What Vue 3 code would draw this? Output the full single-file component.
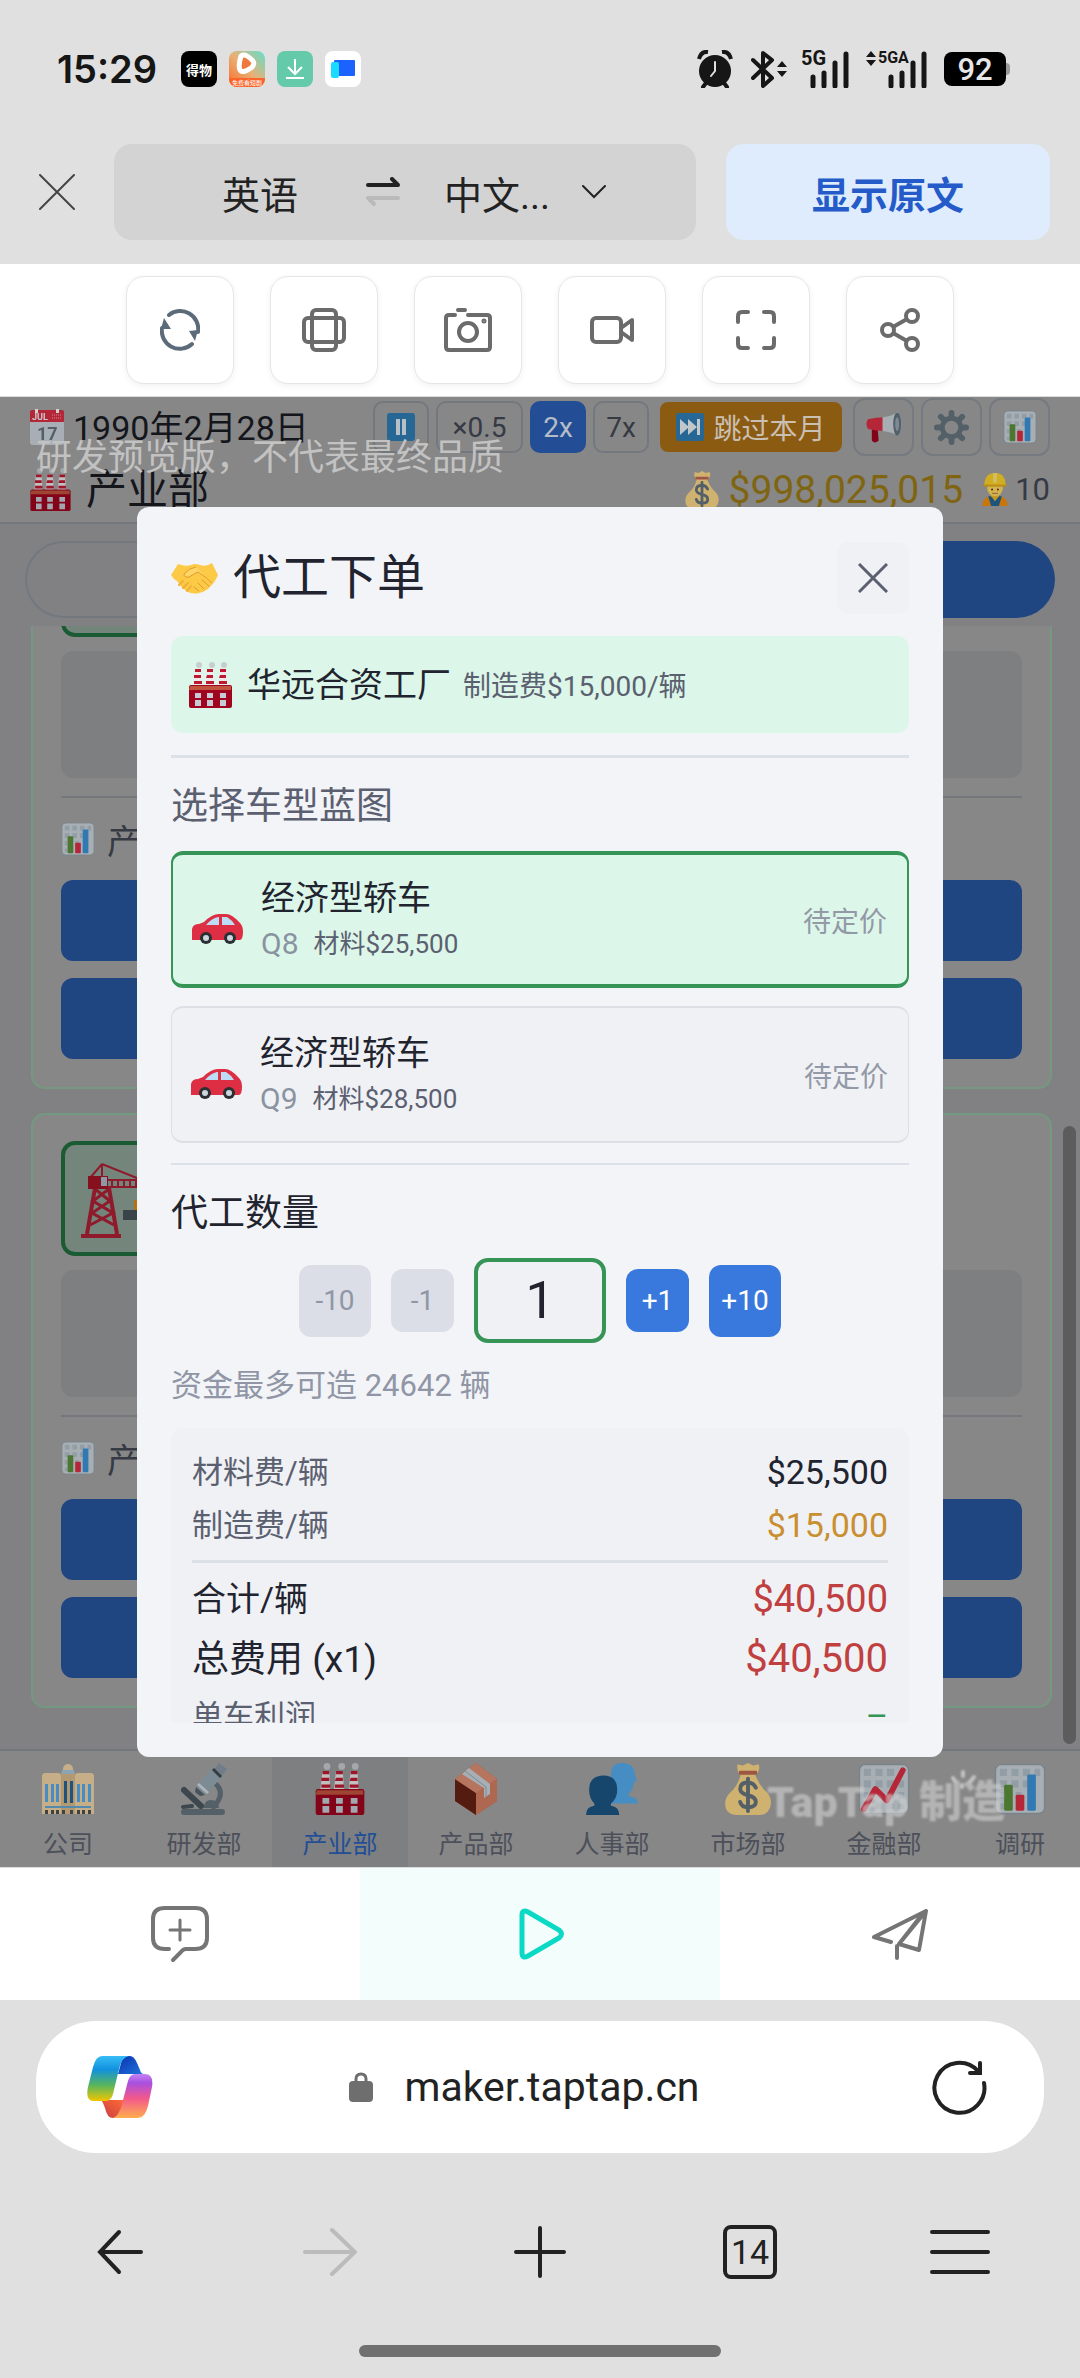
<script setup>
import { ref, computed } from 'vue'

const speeds = [
  { label: '×0.5', cls: 'speed-wide' },
  { label: '2x', cls: 'speed-on' },
  { label: '7x', cls: '' }
]

const departments = [
  { name: '公司', icon: 'company' },
  { name: '研发部', icon: 'microscope' },
  { name: '产业部', icon: 'factory' },
  { name: '产品部', icon: 'box' },
  { name: '人事部', icon: 'people' },
  { name: '市场部', icon: 'bag' },
  { name: '金融部', icon: 'trend' },
  { name: '调研', icon: 'chart' }
]
const activeDept = ref('产业部')

const models = [
  { id: 'Q8', name: '经济型轿车', material: 25500 },
  { id: 'Q9', name: '经济型轿车', material: 28500 }
]
const selectedId = ref('Q8')
const selected = computed(() => models.find((m) => m.id === selectedId.value))
const fee = 15000
const maxQty = 24642
const qty = ref(1)
const unit = computed(() => selected.value.material + fee)
const money = (n) => '$' + n.toLocaleString('en-US')
const change = (d) => {
  qty.value = Math.min(maxQty, Math.max(1, Number(qty.value) + d))
}
</script>

<template>
  <div class="phone">
    <svg class="defs" width="0" height="0" aria-hidden="true">
      <symbol id="factory" viewBox="0 0 43 46">
        <g fill="#c9cdd0"><circle cx="10" cy="3" r="3" /><circle cx="23" cy="3" r="3" /><circle cx="35" cy="3" r="3" /></g>
        <path d="M6 7h6l1 18H4zM18 7h6l1 18h-9zM31 7h6l1 18h-9z" fill="#eee9ea" />
        <path d="M6 7h6v3H6zM5 13h7v3H5zM5 19h8v3H5zM18 7h6v3h-6zM18 13h6v3h-7zM17 19h8v3h-8zM31 7h6v3h-6zM31 13h6v3h-7zM30 19h8v3h-8z" fill="#be1931" />
        <rect y="23" width="43" height="23" rx="2" fill="#a0041e" />
        <path d="M1 24h41v4H0z" fill="#c1543f" />
        <path d="M6 31h6v5H6zM18 31h6v5h-6zM31 31h6v5h-6zM6 38h6v6H6zM18 38h6v6h-6zM31 38h6v6h-6z" fill="#c5ccd6" />
      </symbol>
      <symbol id="chart" viewBox="0 0 36 36">
        <rect x="1" y="1" width="34" height="34" rx="4" fill="#ccd6dd" stroke="#94a0a8" />
        <path d="M4 4h5v5H4zM12 4h5v5h-5zM20 4h5v5h-5zM28 4h4v5h-4zM4 12h5v5H4zM12 12h5v5h-5zM20 12h5v5h-5zM4 20h3v5H4zM15 20h4v5h-4zM4 28h3v4H4z" fill="#b2c0c9" />
        <rect x="7" y="15" width="6" height="18" rx="1" fill="#5c913b" />
        <rect x="15" y="22" width="6" height="11" rx="1" fill="#dd2e44" />
        <rect x="23" y="8" width="6" height="25" rx="1" fill="#3b94d9" />
      </symbol>
      <symbol id="trend" viewBox="0 0 36 36">
        <rect x="1" y="1" width="34" height="34" rx="4" fill="#ccd6dd" stroke="#94a0a8" />
        <path d="M4 4h5v5H4zM12 4h5v5h-5zM20 4h5v5h-5zM4 12h5v5H4zM12 12h5v5h-5zM20 12h5v5h-5zM28 12h4v5h-4zM4 20h3v5H4zM20 20h5v5h-5zM28 20h4v5h-4zM12 28h5v4h-5zM20 28h5v4h-5zM28 28h4v4h-4z" fill="#b2c0c9" />
        <path d="M4 32l8-14 8 8L31 5" fill="none" stroke="#dd2e44" stroke-width="4" stroke-linecap="round" stroke-linejoin="round" />
      </symbol>
      <symbol id="bag" viewBox="0 0 36 40">
        <path d="M11 8Q9 4 10 1l4 1 4-2 4 2 4-1q2 3-1 7l-3 4h-8z" fill="#fdd888" />
        <path d="M12 10h12Q27 18 33 23q4 5 2 11-2 6-8 6H9q-6 0-8-5-2-7 3-12 6-5 8-13z" fill="#fdd888" />
        <rect x="11" y="6" width="14" height="3" rx="1" fill="#bf6952" />
        <path d="M24 19q-2-4-6-4-6 0-6 5 0 3 6 5 6 1 6 5 0 4-6 4-5 0-6-4M18 12v25" fill="none" stroke="#67757f" stroke-width="3" stroke-linecap="round" />
      </symbol>
      <symbol id="company" viewBox="0 0 52 50">
        <path d="M0 11l2-2h15l2 2v39H0zM33 11l2-2h15l2 2v39H33z" fill="#f2d6a6" />
        <circle cx="26" cy="5" r="5" fill="#f2d6a6" />
        <path d="M19 8h14v42H19z" fill="#d9ba8b" />
        <path d="M20 6h12v4H20z" fill="#a8c9dc" />
        <path d="M3 20h3v18H3zM9 20h3v18H9zM14 20h3v18h-3zM35 20h3v18h-3zM40 20h3v18h-3zM46 20h3v18h-3z" fill="#55acee" />
        <path d="M22 17h3v22h-3zM28 17h3v22h-3z" fill="#226699" />
        <path d="M3 42h46v2H3z" fill="#66a8d0" />
        <path d="M3 46h3v4H3zM9 46h3v4H9zM14 46h3v4h-3zM20 46h3v4h-3zM28 46h3v4h-3zM35 46h3v4h-3zM40 46h3v4h-3zM46 46h3v4h-3z" fill="#4b5052" />
      </symbol>
      <symbol id="microscope" viewBox="0 0 46 52">
        <path d="M34 20q9 8 3 18-2 4-6 8" fill="none" stroke="#66757f" stroke-width="5" />
        <path d="M23 45q0-8 7-8t8 8z" fill="#66757f" />
        <rect y="46" width="44" height="6" rx="3" fill="#66757f" />
        <path d="M3 27l17 16" stroke="#4a585f" stroke-width="6" stroke-linecap="round" />
        <path d="M2 44l9-1" stroke="#4a585f" stroke-width="4" stroke-linecap="round" />
        <path d="M15 24L31 5l10 9-17 18z" fill="#99aab5" />
        <path d="M15 24l9 8-5 1-5-4z" fill="#56646c" />
        <path d="M17 21l10 9" stroke="#d3dde3" stroke-width="3" />
        <path d="M33 7l5-7 8 6-6 8z" fill="#8899a6" />
        <path d="M32 6l8 8" stroke="#3e4a51" stroke-width="3" />
      </symbol>
      <symbol id="box" viewBox="0 0 42 52">
        <path d="M21 0l21 16v22L21 52 0 38V16z" fill="#c1694f" />
        <path d="M0 16l21 14v22L0 38z" fill="#662113" />
        <path d="M21 30l21-14v22L21 52z" fill="#d47e61" />
        <path d="M0 16L21 0l21 16-21 14z" fill="#dd8f74" />
        <path d="M7 11l7-6 21 16v10l-6 4V25z" fill="#ccd6dd" />
        <path d="M10 8l21 16v10" stroke="#99aab5" stroke-width="1" fill="none" />
      </symbol>
      <symbol id="people" viewBox="0 0 50 50">
        <path d="M34 0q13 0 13 12l2 5-3 2q-1 8-5 10v3q9 1 9 7H24V14Q23 0 34 0z" fill="#55acee" />
        <path d="M17 12q13 0 13 14 0 8-6 13v2q8 1 8 9H0q0-8 8-9v-2q-5-5-5-13 0-14 14-14z" fill="#1c5584" />
      </symbol>
      <symbol id="horn" viewBox="0 0 36 32">
        <path d="M6 18h6l1 12q-4 4-7 0z" fill="#a0041e" />
        <path d="M2 8q8-2 17-2v14q-8 0-17-2-3-5 0-10z" fill="#dd2e44" />
        <path d="M17 6Q27 5 33 0v25q-6-4-16-5z" fill="#ccd6dd" />
        <ellipse cx="32" cy="13" rx="4" ry="12" fill="#66757f" />
        <ellipse cx="32" cy="13" rx="2" ry="7" fill="#99aab5" />
      </symbol>
      <symbol id="gear" viewBox="0 0 36 36">
        <g stroke="#66757f" stroke-width="6" stroke-linecap="round">
          <path d="M18 3v30M3 18h30M7 7l22 22M29 7L7 29" />
        </g>
        <circle cx="18" cy="18" r="12" fill="#66757f" />
        <circle cx="18" cy="18" r="7" fill="#a3a3a3" />
      </symbol>
      <symbol id="worker" viewBox="0 0 26 34">
        <path d="M0 34q0-9 8-10h10q8 1 8 10z" fill="#f4900c" />
        <path d="M6 24h14l-3 10H9z" fill="#269" />
        <path d="M9 24l4 5 4-5v-3H9z" fill="#f1b92a" />
        <circle cx="13" cy="16" r="8" fill="#ffdc5d" />
        <path d="M2 13Q2 0 13 0t11 13z" fill="#ffd32a" />
        <path d="M1 12h24v2H1z" fill="#e5a91a" />
        <path d="M11 0h4v10h-4z" fill="#ffe678" />
        <circle cx="10" cy="17" r="1" fill="#662113" /><circle cx="16" cy="17" r="1" fill="#662113" />
        <path d="M10 21h6" stroke="#c1694f" />
      </symbol>
      <symbol id="car" viewBox="0 0 51 30">
        <path d="M0 26V15q1-5 7-5l5-2Q20 0 27 0h7q6 0 14 9 3 3 3 9 0 7-3 8z" fill="#dd2e44" />
        <path d="M14 11q6-7 12-8h1v8zM30 3h5q5 3 8 8H30z" fill="#bbddf5" />
        <circle cx="14" cy="24" r="6" fill="#292f33" /><circle cx="38" cy="24" r="6" fill="#292f33" />
        <circle cx="14" cy="24" r="3" fill="#ccd6dd" /><circle cx="38" cy="24" r="3" fill="#ccd6dd" />
      </symbol>
      <symbol id="handshake" viewBox="0 0 47 31">
        <path d="M0 12L7 1q7 3 13 1 4-2 9 0 6 2 12-2l6 12-3 6q-3 4-7 8-4 3-9 4-8 2-14-3-5-4-8-9-4-2-6-6z" fill="#fdca47" />
        <path d="M25 4q-7 1-12 7 0 4 5 3 5-3 9-5 8 5 14 11" fill="#ffd566" stroke="#e09a2b" stroke-width="1" />
        <path d="M31 17l7 6M27 20l6 6M23 24l5 4" fill="none" stroke="#e09a2b" stroke-width="1" stroke-linecap="round" />
        <path d="M8 22l4-4M12 25l5-5M16 28l4-5" fill="none" stroke="#f0b036" stroke-width="2" stroke-linecap="round" />
      </symbol>
      <symbol id="crane" viewBox="0 0 76 76">
        <g fill="none" stroke="#8f1a2b">
          <path d="M21 2v12M21 2L9 16M21 2l55 22" stroke-width="2" />
          <path d="M14 26L6 72M28 26l8 46" stroke-width="4" />
          <path d="M14 27l15 12-18 12 22 12M28 27L12 39l20 12L9 63" stroke-width="3" />
          <path d="M26 18h50M26 25h50" stroke-width="2" />
          <path d="M31 18v7M37 18v7M43 18v7M49 18v7M55 18v7" stroke-width="2" />
        </g>
        <path d="M7 14h20v13H7z" fill="#87101f" />
        <path d="M20 15h6v9h-6z" fill="#8b9aa6" />
        <path d="M0 72h40v4H0z" fill="#8f1a2b" />
        <path d="M58 26v14" stroke="#39434a" stroke-width="2" />
        <path d="M53 38h20v10H53z" fill="#b4730d" />
        <path d="M42 48h34v10H42z" fill="#39434a" />
      </symbol>
    </svg>

    <header class="status">
      <span class="clock">15:29</span>
      <span class="app-icon app-black">得物</span>
      <span class="app-icon app-video">
        <svg width="24" height="26" viewBox="0 0 24 26"><path d="M6 4Q10 1 17 8q4 4-1 8-9 6-11 2-2-4 1-14z" fill="#f0783c" stroke="#fff" stroke-width="5" stroke-linejoin="round" /></svg>
        <small>免费看短剧</small>
      </span>
      <span class="app-icon app-green">
        <svg width="20" height="22" viewBox="0 0 20 22" fill="none" stroke="#fff" stroke-width="2"><path d="M10 1v14M3 9l7 7 7-7M1 20h18" /></svg>
      </span>
      <span class="app-icon app-white">
        <svg width="26" height="22" viewBox="0 0 26 22"><rect x="4" y="2" width="21" height="16" rx="1" fill="#1b62ff" /><rect x="1" y="4" width="8" height="16" rx="2" fill="#18dcff" /></svg>
      </span>
      <span class="grow"></span>
      <svg class="st-alarm" width="36" height="38" viewBox="0 0 36 38">
        <path d="M2 9Q4 1 11 2M34 9Q32 1 25 2" stroke="#161616" stroke-width="4" fill="none" />
        <path d="M9 33l-3 4M27 33l3 4" stroke="#161616" stroke-width="4" stroke-linecap="round" />
        <circle cx="18" cy="21" r="16" fill="#161616" />
        <path d="M18 12v9l-4 5" stroke="#e0e0e0" stroke-width="2" fill="none" stroke-linecap="round" />
      </svg>
      <svg class="st-bt" width="36" height="38" viewBox="0 0 36 38">
        <path d="M2 10l19 18-9 8V3l9 7L2 28" fill="none" stroke="#161616" stroke-width="4" stroke-linejoin="round" stroke-linecap="round" />
        <path d="M26 17l5-6 5 6zM26 21h10l-5 6z" fill="#161616" />
      </svg>
      <span class="signal">
        <b>5G</b>
        <svg width="39" height="37" viewBox="0 0 39 37"><path d="M3 26v9M14 22v13M25 12v23M36 3v32" stroke="#161616" stroke-width="5" stroke-linecap="round" /></svg>
      </span>
      <span class="signal signal-a">
        <svg class="updown" width="10" height="16" viewBox="0 0 10 16"><path d="M0 6l5-6 5 6zM0 9h10l-5 6z" fill="#161616" /></svg>
        <b>5GA</b>
        <svg width="39" height="37" viewBox="0 0 39 37"><path d="M3 26v9M14 22v13M25 12v23M36 3v32" stroke="#161616" stroke-width="5" stroke-linecap="round" /></svg>
      </span>
      <span class="battery">92</span>
    </header>

    <div class="translate">
      <button class="plain" aria-label="关闭翻译">
        <svg width="36" height="36" viewBox="0 0 36 36"><path d="M1 1l34 34M35 1L1 35" stroke="#444" stroke-width="2" stroke-linecap="round" /></svg>
      </button>
      <div class="langs">
        <button class="plain lang-from">英语</button>
        <svg class="swap" width="34" height="30" viewBox="0 0 34 30" fill="none" stroke-width="4" stroke-linecap="round" stroke-linejoin="round">
          <path d="M2 8h30l-6-6" stroke="#222" /><path d="M32 21H2l6 6" stroke="#bababa" />
        </svg>
        <button class="plain lang-to">中文...
          <svg width="24" height="14" viewBox="0 0 24 14"><path d="M1 1l11 11L23 1" fill="none" stroke="#222" stroke-width="2" stroke-linecap="round" /></svg>
        </button>
      </div>
      <button class="show-original">显示原文</button>
    </div>

    <nav class="tools">
      <button class="tool" aria-label="刷新">
        <svg width="40" height="42" viewBox="0 0 40 42"><path d="M9 6a18 18 0 0 1 29 17M32 35A18 18 0 0 1 2 19" fill="none" stroke="#5c6b79" stroke-width="4" stroke-linecap="round" /><path d="M29 22l9-1-3 11zM11 20L4 9 1 20z" fill="#5c6b79" /></svg>
      </button>
      <button class="tool" aria-label="旋转">
        <svg width="44" height="44" viewBox="0 0 44 44" fill="none" stroke="#6b6b6b" stroke-width="4"><rect x="2" y="10" width="40" height="24" rx="4" /><rect x="10" y="2" width="24" height="40" rx="4" /></svg>
      </button>
      <button class="tool" aria-label="截图">
        <svg width="48" height="44" viewBox="0 0 48 44" fill="none" stroke="#6b6b6b" stroke-width="4" stroke-linecap="round"><path d="M11 7H5q-3 0-3 3v29q0 3 3 3h38q3 0 3-3V10q0-3-3-3H24M14 2h7" /><circle cx="24" cy="24" r="9" /><circle cx="40" cy="13" r="1" stroke-width="3" /></svg>
      </button>
      <button class="tool" aria-label="录屏">
        <svg width="44" height="30" viewBox="0 0 44 30" fill="none" stroke="#6b6b6b" stroke-width="4" stroke-linejoin="round"><rect x="2" y="3" width="29" height="24" rx="4" /><path d="M31 13l11-8v20l-11-8" /></svg>
      </button>
      <button class="tool" aria-label="全屏">
        <svg width="40" height="40" viewBox="0 0 40 40" fill="none" stroke="#6b6b6b" stroke-width="4" stroke-linecap="round"><path d="M2 12V6q0-4 4-4h6M28 2h6q4 0 4 4v6M38 28v6q0 4-4 4h-6M12 38H6q-4 0-4-4v-6" /></svg>
      </button>
      <button class="tool" aria-label="分享">
        <svg width="40" height="44" viewBox="0 0 40 44" fill="none" stroke="#6b6b6b" stroke-width="4"><circle cx="32" cy="8" r="6" /><circle cx="8" cy="22" r="6" /><circle cx="32" cy="36" r="6" /><path d="M13 19l14-8M13 25l14 8" /></svg>
      </button>
    </nav>

    <main class="game">
      <section class="backdrop">
        <div class="topbar">
          <div class="row row-date">
            <svg class="dim" width="34" height="36" viewBox="0 0 34 36">
              <rect y="10" width="34" height="26" rx="3" fill="#ccd6dd" />
              <path d="M0 3q0-2 2-2h30q2 0 2 2v10H0z" fill="#dd2e44" />
              <path d="M5 0h3v4H5zM26 0h3v4h-3z" fill="#fff" />
              <text x="2" y="11" font-size="9" font-weight="700" fill="#f3f5f6">JUL</text>
              <path d="M22 6h10M22 9h10" stroke="#f4abb4" stroke-width="1" stroke-dasharray="1 1" />
              <text x="7" y="31" font-size="18" font-weight="700" fill="#66757f">17</text>
            </svg>
            <span class="date">1990年2月28日</span>
            <span class="grow"></span>
            <button class="speed" aria-label="暂停">
              <svg width="28" height="28" viewBox="0 0 28 28"><rect width="28" height="28" rx="3" fill="#266795" /><path d="M11 6v16M17 6v16" stroke="#b7c0c6" stroke-width="4" /></svg>
            </button>
            <button v-for="s in speeds" :key="s.label" class="speed" :class="s.cls">{{ s.label }}</button>
            <button class="skip">
              <svg width="28" height="28" viewBox="0 0 28 28"><rect width="28" height="28" rx="3" fill="#266795" /><path d="M4 6l9 8-9 8zM12 6l9 8-9 8zM21 6h3v16h-3z" fill="#c0c6ca" /></svg>
              跳过本月
            </button>
            <button class="square" aria-label="公告"><svg class="dim" width="35" height="32"><use href="#horn" /></svg></button>
            <button class="square" aria-label="设置"><svg class="dim" width="35" height="35"><use href="#gear" /></svg></button>
            <button class="square" aria-label="统计"><svg class="dim" width="34" height="34"><use href="#chart" /></svg></button>
          </div>
          <div class="row row-dept">
            <svg class="dim" width="41" height="43"><use href="#factory" /></svg>
            <h1>产业部</h1>
            <span class="grow"></span>
            <svg class="dim" width="34" height="38"><use href="#bag" /></svg>
            <span class="cash">$998,025,015</span>
            <svg class="dim" width="26" height="33"><use href="#worker" /></svg>
            <span class="staff">10</span>
          </div>
        </div>
        <div class="pills">
          <button class="pill" aria-label="自有"></button>
          <button class="pill pill-on" aria-label="代工"></button>
        </div>
        <div class="plants">
          <article v-for="n in 2" :key="n" class="plant">
            <div class="plant-icon"><svg width="76" height="76"><use href="#crane" /></svg></div>
            <div class="plant-info"></div>
            <div class="plant-stats"><svg class="dim" width="34" height="34"><use href="#chart" /></svg>产</div>
            <button class="plant-btn" aria-label="下单"></button>
            <button class="plant-btn" aria-label="详情"></button>
          </article>
          <i class="scrollbar"></i>
        </div>
        <nav class="depts">
          <button v-for="d in departments" :key="d.name" class="dept" :class="{ 'dept-on': d.name === activeDept }">
            <svg class="dim" width="52" height="52"><use :href="'#' + d.icon" /></svg>
            {{ d.name }}
          </button>
        </nav>
        <p class="notice">研发预览版，不代表最终品质</p>
        <p class="brand">TapTap 制造
          <svg width="30" height="20" viewBox="0 0 30 20" fill="none" stroke="#c4c4c4" stroke-width="4" stroke-linecap="round"><path d="M4 8l2 3M14 2v4M25 7l-4 5M13 15v2" /></svg>
        </p>
      </section>

      <div class="overlay">
        <section class="dialog" role="dialog" aria-label="代工下单">
          <div class="head">
            <svg width="47" height="31"><use href="#handshake" /></svg>
            <h2>代工下单</h2>
            <button class="close" aria-label="关闭">
              <svg width="30" height="30" viewBox="0 0 30 30"><path d="M1 1l28 28M29 1L1 29" stroke="#5b6070" stroke-width="3" /></svg>
            </button>
          </div>
          <div class="body">
            <div class="banner">
              <svg width="43" height="46"><use href="#factory" /></svg>
              <strong>华远合资工厂</strong>
              <span>制造费{{ money(fee) }}/辆</span>
            </div>
            <h3 class="section section-muted">选择车型蓝图</h3>
            <div class="models">
              <button
                v-for="m in models"
                :key="m.id"
                class="model"
                :class="{ 'model-on': m.id === selectedId }"
                :aria-pressed="m.id === selectedId"
                @click="selectedId = m.id"
              >
                <svg width="51" height="30"><use href="#car" /></svg>
                <span class="model-text">
                  <span class="model-name">{{ m.name }}</span>
                  <span class="model-sub"><span class="model-q">{{ m.id }}</span>材料{{ money(m.material) }}</span>
                </span>
                <span class="model-price">待定价</span>
              </button>
            </div>
            <h3 class="section section-thin"><label for="qty">代工数量</label></h3>
            <div class="stepper">
              <button class="step step-big" :disabled="qty <= 1" @click="change(-10)">-10</button>
              <button class="step" :disabled="qty <= 1" @click="change(-1)">-1</button>
              <input id="qty" v-model="qty" inputmode="numeric" />
              <button class="step" @click="change(1)">+1</button>
              <button class="step step-big" @click="change(10)">+10</button>
            </div>
            <p class="hint">资金最多可造 {{ maxQty }} 辆</p>
            <dl class="costs">
              <div class="cost"><dt>材料费/辆</dt><dd>{{ money(selected.material) }}</dd></div>
              <div class="cost"><dt>制造费/辆</dt><dd class="amber">{{ money(fee) }}</dd></div>
              <div class="cost cost-sum"><dt>合计/辆</dt><dd>{{ money(unit) }}</dd></div>
              <div class="cost cost-total"><dt>总费用 (x{{ qty }})</dt><dd>{{ money(unit * qty) }}</dd></div>
              <div class="cost"><dt>单车利润</dt><dd class="green">–</dd></div>
            </dl>
          </div>
        </section>
      </div>
    </main>

    <nav class="maker">
      <button aria-label="评论">
        <svg width="60" height="58" viewBox="0 0 60 58" fill="none" stroke="#757575" stroke-linecap="round"><path d="M19 44h-4q-12 0-12-11V14Q3 3 15 3h30q12 0 12 11v19q0 11-12 11H36q-3 0-5 3l-8 8" stroke-width="4" /><path d="M30 15v20M20 25h20" stroke-width="3" /></svg>
      </button>
      <button class="maker-on" aria-label="播放">
        <svg width="48" height="52" viewBox="0 0 48 52"><path d="M6 7q0-6 6-3l31 18q5 4 0 8L12 48q-6 3-6-3z" fill="none" stroke="#0ad9c6" stroke-width="5" /></svg>
      </button>
      <button aria-label="发送">
        <svg width="56" height="52" viewBox="0 0 56 52" fill="none" stroke="#757575" stroke-width="4" stroke-linecap="round" stroke-linejoin="round"><path d="M19 34L2 29 54 3l-7 39-20-6L54 3M27 36L52 4M25 38v12" /></svg>
      </button>
    </nav>

    <footer class="browser">
      <div class="address">
        <svg width="66" height="62" viewBox="0 0 66 62">
          <defs>
            <linearGradient id="cp1" x1="0" y1="0" x2="0" y2="1"><stop offset="0" stop-color="#36bdf5" /><stop offset=".3" stop-color="#1291df" /><stop offset=".65" stop-color="#58b65c" /><stop offset="1" stop-color="#f2c600" /></linearGradient>
            <linearGradient id="cp2" x1="0" y1="0" x2="0" y2="1"><stop offset="0" stop-color="#c583f5" /><stop offset=".2" stop-color="#a850e0" /><stop offset=".55" stop-color="#f2588c" /><stop offset="1" stop-color="#ffae4e" /></linearGradient>
            <linearGradient id="cp3" x1="0" y1="0" x2="1" y2="1"><stop offset="0" stop-color="#0a2fb0" /><stop offset="1" stop-color="#1f78dc" /></linearGradient>
            <linearGradient id="cp4" x1="0" y1="1" x2="1" y2="0"><stop offset="0" stop-color="#c53c48" /><stop offset="1" stop-color="#ff6b33" /></linearGradient>
          </defs>
          <path d="M36 0h7q4 0 7 7l3 7q1 4 4 4H31z" fill="url(#cp3)" />
          <path d="M32 62h-6q-6 0-8-10l-2-5q-1-3-4-3h26z" fill="url(#cp4)" />
          <path d="M15 0h27q-7 1-10 13l-6 25q-2 7-7 7H7q-9 0-6-14L6 11Q9 0 15 0z" fill="url(#cp1)" />
          <path d="M51 62H26q6-2 9-14l6-23q2-7 7-7h10q9 0 7 13l-4 19q-3 12-10 12z" fill="url(#cp2)" />
        </svg>
        <a class="url" href="#">
          <svg width="24" height="30" viewBox="0 0 24 30"><path d="M7 12V7q0-5 5-5t5 5v5" fill="none" stroke="#6e6e6e" stroke-width="3" /><rect y="9" width="24" height="21" rx="4" fill="#6e6e6e" /></svg>
          maker.taptap.cn
        </a>
        <button class="plain" aria-label="刷新页面">
          <svg width="56" height="56" viewBox="0 0 56 56" fill="none" stroke="#222" stroke-width="4" stroke-linecap="round"><path d="M52 24A25 25 0 1 1 46 12M38 14h10V4" /></svg>
        </button>
      </div>
      <nav class="keys">
        <button class="plain" aria-label="后退"><svg width="46" height="46" viewBox="0 0 46 46" fill="none" stroke="#222" stroke-width="4" stroke-linecap="round"><path d="M22 3L3 23l19 20M3 23h41" /></svg></button>
        <button class="plain" aria-label="前进"><svg width="54" height="50" viewBox="0 0 54 50" fill="none" stroke="#bbb" stroke-width="4" stroke-linecap="round"><path d="M29 3l23 22-23 22M52 25H2" /></svg></button>
        <button class="plain" aria-label="新建标签页"><svg width="52" height="52" viewBox="0 0 52 52" stroke="#222" stroke-width="4" stroke-linecap="round"><path d="M26 2v48M2 26h48" /></svg></button>
        <button class="plain tabs" aria-label="标签页"><span>14</span></button>
        <button class="plain" aria-label="菜单"><svg width="60" height="44" viewBox="0 0 60 44" stroke="#222" stroke-width="4" stroke-linecap="round"><path d="M2 2h56M2 22h56M2 42h56" /></svg></button>
      </nav>
      <div class="homebar"></div>
    </footer>
  </div>
</template>

<style>
body {
  margin: 0;
  background: #e0e0e0;
}
</style>

<style scoped>
.phone {
  display: flex;
  flex-direction: column;
  height: 100vh;
  background: #e0e0e0;
  color: #222;
  font-family: Roboto, "Noto Sans CJK SC", sans-serif;
}
.phone * {
  box-sizing: border-box;
}
.defs {
  position: absolute;
}
button,
input {
  margin: 0;
  padding: 0;
  border: 0;
  background: none;
  color: inherit;
  font: inherit;
}
svg {
  flex: none;
}
h1,
h2,
h3,
p,
dl,
dd {
  margin: 0;
  font-weight: 400;
}
.grow {
  flex: 1;
}
.plain {
  display: flex;
  align-items: center;
  justify-content: center;
}

/* system status bar */
.status {
  display: flex;
  align-items: center;
  flex: none;
  height: 140px;
  padding: 0 74px 2px 57px;
}
.clock {
  margin-right: 24px;
  font-family: Inter, Roboto, sans-serif;
  font-size: 38px;
  font-weight: 600;
  color: #161616;
}
.app-icon {
  display: flex;
  align-items: center;
  justify-content: center;
  width: 36px;
  height: 36px;
  margin-right: 12px;
  border-radius: 8px;
  overflow: hidden;
}
.app-black {
  background: #000;
  color: #fff;
  font-size: 13px;
  font-weight: 700;
}
.app-video {
  flex-direction: column;
  background: linear-gradient(to bottom left, #5fe0cc, #e8b176 50%, #fb6a28);
}
.app-video small {
  width: 36px;
  background: #fa6428;
  color: #fff;
  font-size: 6px;
  line-height: 9px;
  text-align: center;
}
.app-green {
  background: #64caaa;
}
.app-white {
  background: #fff;
}
.st-alarm {
  margin-right: 18px;
}
.st-bt {
  margin-right: 14px;
}
.signal {
  position: relative;
  display: flex;
  align-items: flex-end;
  justify-content: flex-end;
  width: 48px;
  height: 37px;
  margin-right: 17px;
}
.signal b {
  position: absolute;
  top: -3px;
  left: 0;
  font-size: 20px;
  line-height: 20px;
  color: #161616;
}
.signal-a {
  width: 61px;
}
.signal-a b {
  left: 12px;
  font-size: 16px;
}
.updown {
  position: absolute;
  top: 0;
  left: 0;
}
.battery {
  position: relative;
  width: 62px;
  height: 34px;
  border-radius: 8px;
  background: #000;
  color: #e6e6e6;
  font-size: 31px;
  font-weight: 500;
  line-height: 35px;
  text-align: center;
}
.battery::after {
  content: "";
  position: absolute;
  top: 11px;
  right: -4px;
  width: 4px;
  height: 12px;
  border-radius: 0 4px 4px 0;
  background: #999;
}

/* translation bar */
.translate {
  display: flex;
  align-items: center;
  flex: none;
  gap: 30px;
  padding: 4px 30px 24px 39px;
}
.langs {
  display: flex;
  flex: 1;
  align-items: center;
  justify-content: center;
  height: 96px;
  margin-left: 9px;
  border-radius: 18px;
  background: #d3d3d3;
  font-size: 38px;
}
.swap {
  margin: 0 44px 0 68px;
}
.lang-to {
  gap: 32px;
}
.lang-from {
  padding-left: 18px;
}
.show-original {
  width: 324px;
  height: 96px;
  border-radius: 18px;
  background: #dfecfe;
  color: #245bc9;
  font-size: 38px;
  font-weight: 700;
}

/* page tools */
.tools {
  display: flex;
  align-items: center;
  justify-content: center;
  flex: none;
  gap: 36px;
  height: 133px;
  border-bottom: 1px solid #dcdcdc;
  background: #fff;
}
.tool {
  display: flex;
  align-items: center;
  justify-content: center;
  width: 108px;
  height: 108px;
  border: 1px solid #e6e6e6;
  border-radius: 18px;
  background: #fff;
  box-shadow: 0 2px 6px rgba(0, 0, 0, 0.06);
}

/* game behind the dialog */
.game {
  display: grid;
  grid-template: minmax(0, 1fr) / minmax(0, 1fr);
  flex: 1;
  min-height: 0;
}
.backdrop,
.overlay {
  grid-area: 1 / 1;
  min-height: 0;
}
.backdrop {
  position: relative;
  display: flex;
  flex-direction: column;
  overflow: hidden;
  background: #818184;
}
.dim {
  filter: brightness(0.82);
}
.topbar {
  flex: none;
  border-bottom: 2px solid #72777c;
  background: #878787;
}
.row {
  display: flex;
  align-items: center;
  padding: 0 30px;
}
.row-date {
  gap: 7px;
  height: 60px;
}
.date {
  margin-left: 2px;
  padding-bottom: 4px;
  color: #14161c;
  font-size: 34px;
}
.speed {
  display: flex;
  align-items: center;
  justify-content: center;
  width: 56px;
  height: 52px;
  border: 2px solid #73787f;
  border-radius: 10px;
  color: #363a44;
  font-size: 28px;
}
.speed-wide {
  width: 87px;
}
.speed-on {
  border: 0;
  background: #234e95;
  color: #b4bcc8;
}
.skip {
  display: flex;
  align-items: center;
  justify-content: center;
  gap: 9px;
  width: 182px;
  height: 50px;
  margin: 0 4px;
  border-radius: 8px;
  background: #8c5b12;
  color: #c9bfb2;
  font-size: 28px;
}
.square {
  display: flex;
  align-items: center;
  justify-content: center;
  width: 61px;
  height: 58px;
  border: 2px solid #757a80;
  border-radius: 12px;
}
.row-dept {
  height: 65px;
}
.row-dept h1 {
  margin-left: 15px;
  color: #14161c;
  font-size: 41px;
  line-height: 60px;
}
.cash {
  margin: 0 19px 0 10px;
  color: #7f6412;
  font-size: 39px;
}
.staff {
  margin-left: 7px;
  color: #363a44;
  font-size: 31px;
}
.pills {
  display: flex;
  flex: none;
  gap: 12px;
  padding: 17px 25px 8px;
}
.pill {
  flex: 1;
  height: 77px;
  border: 2px solid #73787f;
  border-radius: 40px;
}
.pill-on {
  border: 0;
  background: #1f4681;
}
.plants {
  position: relative;
  display: flex;
  flex: 1;
  flex-direction: column;
  justify-content: flex-end;
  gap: 24px;
  min-height: 0;
  padding: 0 28px 41px 31px;
  overflow: hidden;
}
.plant {
  display: flex;
  flex: none;
  flex-direction: column;
  padding: 26px 28px 28px;
  border: 2px solid #739a80;
  border-radius: 14px;
  background: #878787;
}
.plant-icon {
  width: 124px;
  height: 115px;
  margin-bottom: 14px;
  padding: 17px 16px;
  border: 4px solid #1b5b33;
  border-radius: 14px;
  background: #74857b;
  overflow: hidden;
}
.plant-info {
  height: 127px;
  border-radius: 12px;
  background: #7e7f81;
}
.plant-stats {
  display: flex;
  align-items: center;
  gap: 12px;
  height: 84px;
  margin-top: 18px;
  border-top: 2px solid #74777c;
  color: #363a44;
  font-size: 34px;
}
.plant-btn {
  height: 81px;
  border-radius: 12px;
  background: #1f4681;
}
.plant-btn + .plant-btn {
  margin-top: 17px;
}
.scrollbar {
  position: absolute;
  right: 4px;
  bottom: 5px;
  width: 13px;
  height: 55%;
  border-radius: 7px;
  background: #5c5c5c;
}
.depts {
  display: flex;
  flex: none;
  height: 118px;
  border-top: 2px solid #72777c;
  background: #878787;
}
.dept {
  display: flex;
  flex: 1 0 136px;
  flex-direction: column;
  align-items: center;
  padding-top: 12px;
  color: #4c505a;
  font-size: 25px;
  line-height: 59px;
}
.dept-on {
  background: #7d7f81;
  color: #234e95;
}
.notice {
  position: absolute;
  top: 37px;
  left: 36px;
  color: #c2c2c2;
  font-size: 36px;
  line-height: 48px;
}
.brand {
  position: absolute;
  right: 75px;
  bottom: 37px;
  color: rgba(210, 210, 210, 0.6);
  font-size: 43px;
  font-weight: 900;
  line-height: 56px;
  filter: blur(1px);
}
.brand svg {
  position: absolute;
  top: -4px;
  right: 26px;
}

/* order dialog */
.overlay {
  position: relative;
  display: flex;
  padding: 110px 137px;
}
.dialog {
  display: flex;
  flex: 1;
  flex-direction: column;
  min-width: 0;
  padding: 35px 34px 34px;
  border-radius: 12px;
  background: #f3f4f8;
  color: #21242f;
}
.head {
  display: flex;
  align-items: center;
  flex: none;
  gap: 15px;
  margin-bottom: 22px;
}
.head h2 {
  flex: 1;
  font-size: 48px;
  line-height: 72px;
}
.close {
  display: flex;
  align-items: center;
  justify-content: center;
  width: 72px;
  height: 72px;
  border-radius: 12px;
  background: #f0f1f5;
}
.body {
  flex: 1;
  min-height: 0;
  overflow: hidden;
}
.banner {
  display: flex;
  align-items: center;
  height: 97px;
  margin-bottom: 22px;
  padding: 0 18px;
  border-radius: 12px;
  background: #dcf7e9;
}
.banner strong {
  margin: 0 12px 0 15px;
  padding-bottom: 4px;
  font-size: 34px;
  font-weight: 400;
}
.banner span {
  padding-bottom: 2px;
  color: #5b6070;
  font-size: 28px;
}
.section {
  padding: 22px 0 18px;
  border-top: 3px solid #dce0e8;
  font-size: 37px;
  line-height: 53px;
}
.section-muted {
  color: #5b6070;
}
.section-thin {
  margin-top: 20px;
  border-top-width: 2px;
}
.models {
  display: flex;
  flex-direction: column;
  gap: 18px;
}
.model {
  display: flex;
  align-items: center;
  height: 137px;
  padding: 0 20px 0 19px;
  border: 2px solid #dce0e6;
  border-width: 2px 1px;
  border-radius: 12px;
  background: #f0f1f5;
  text-align: left;
}
.model-on {
  border-color: #369556;
  border-width: 4px 2px;
  background: #dcf7e9;
}
.model svg {
  margin-top: 18px;
}
.model-text {
  display: flex;
  flex: 1;
  flex-direction: column;
  margin-left: 18px;
}
.model-name {
  font-size: 34px;
  line-height: 48px;
}
.model-sub {
  display: flex;
  align-items: center;
  gap: 15px;
  color: #5b6070;
  font-size: 26px;
  line-height: 44px;
}
.model-q {
  color: #8a93a0;
  font-size: 30px;
}
.model-price {
  color: #9399a6;
  font-size: 28px;
}
.stepper {
  display: flex;
  align-items: center;
  justify-content: center;
  gap: 20px;
}
.step {
  width: 63px;
  height: 63px;
  border-radius: 12px;
  background: #3978dc;
  color: #fff;
  font-size: 28px;
}
.step-big {
  width: 72px;
  height: 72px;
}
.step:disabled {
  background: #dbdee6;
  color: #9096a5;
}
.stepper input {
  width: 132px;
  height: 85px;
  border: 4px solid #369556;
  border-radius: 14px;
  background: #f0f1f5;
  font-size: 52px;
  text-align: center;
}
.hint {
  padding: 20px 0;
  color: #9096a5;
  font-size: 31px;
  line-height: 45px;
}
.costs {
  padding: 17px 21px;
  border-radius: 12px;
  background: #f0f1f5;
}
.cost {
  display: flex;
  align-items: center;
  justify-content: space-between;
  height: 53px;
}
.cost dt {
  padding-bottom: 4px;
  color: #5b6070;
  font-size: 31px;
}
.cost dd {
  font-size: 34px;
}
.cost-sum {
  height: 74px;
  margin-top: 9px;
  border-top: 3px solid #dbe0e7;
}
.cost-sum dt {
  color: #21242f;
  font-size: 34px;
}
.cost-sum dd {
  color: #c03f40;
  font-size: 38px;
}
.cost-total {
  height: 48px;
  margin-bottom: 7px;
}
.cost-total dt {
  color: #21242f;
  font-size: 37px;
}
.cost-total dd {
  color: #c03f40;
  font-size: 40px;
}
.cost .amber {
  color: #c98f30;
}
.cost .green {
  color: #369556;
}

/* maker controls */
.maker {
  display: flex;
  flex: none;
  height: 133px;
  border-top: 1px solid #dcdcdc;
  background: #fff;
}
.maker button {
  display: flex;
  flex: 1;
  align-items: center;
  justify-content: center;
}
.maker .maker-on {
  background: #f3fdfb;
}

/* browser chrome */
.browser {
  flex: none;
  padding: 21px 36px;
}
.address {
  display: flex;
  align-items: center;
  justify-content: space-between;
  height: 132px;
  padding: 0 56px 0 51px;
  border-radius: 60px;
  background: #fff;
}
.url {
  display: flex;
  align-items: center;
  gap: 31px;
  margin-right: 36px;
  color: #222;
  font-size: 41px;
  text-decoration: none;
}
.keys {
  display: flex;
  align-items: center;
  height: 192px;
  margin: 0 -21px;
  padding-top: 6px;
}
.keys button {
  flex: 1;
}
.tabs span {
  width: 54px;
  height: 54px;
  border: 4px solid #222;
  border-radius: 8px;
  font-size: 34px;
  line-height: 46px;
  text-align: center;
}
.homebar {
  width: 36%;
  height: 12px;
  margin: 0 auto;
  border-radius: 6px;
  background: #707070;
}
</style>
